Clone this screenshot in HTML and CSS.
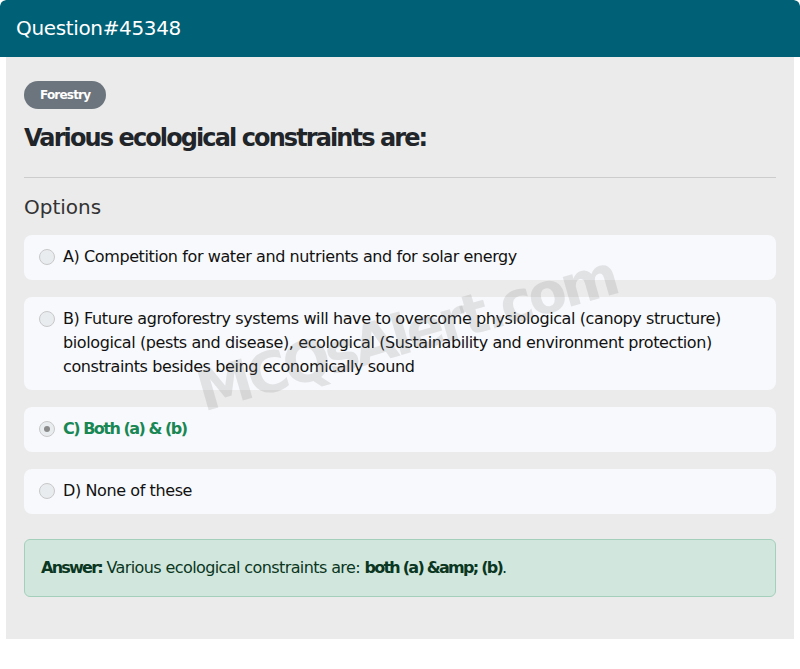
FILE: index.html
```html
<!DOCTYPE html>
<html lang="en">
<head>
<meta charset="utf-8">
<title>Question#45348</title>
<link rel="stylesheet" href="styles.css">
</head>
<body>
<div class="card">
  <div class="card-header">Question#45348</div>
  <div class="card-body">
    <span class="badge">Forestry</span>
    <h4 class="title">Various ecological constraints are:</h4>
    <hr class="divider">
    <h5 class="options-label">Options</h5>
    <div class="options">
      <label class="option"><span class="radio"></span><span class="opt-text">A) Competition for water and nutrients and for solar energy</span></label>
      <label class="option"><span class="radio"></span><span class="opt-text">B) Future agroforestry systems will have to overcome physiological (canopy structure) biological (pests and disease), ecological (Sustainability and environment protection) constraints besides being economically sound</span></label>
      <label class="option correct"><span class="radio checked"></span><span class="opt-text">C) Both (a) &amp; (b)</span></label>
      <label class="option"><span class="radio"></span><span class="opt-text">D) None of these</span></label>
    </div>
    <div class="answer"><strong>Answer:</strong> Various ecological constraints are: <strong>both (a) &amp;amp; (b)</strong>.</div>
    <div class="watermark">MCQsAlert.com</div>
  </div>
</div>
</body>
</html>
```
FILE: styles.css
```css
* { box-sizing: border-box; }
html, body { margin: 0; padding: 0; background: #fff; }
body { font-family: "DejaVu Sans", sans-serif; color: #212529; }
.card { width: 800px; border-radius: 6px; overflow: hidden; padding-bottom: 7px; }
.card-header {
  background: #006075;
  color: #fff;
  font-size: 20px;
  letter-spacing: -0.35px;
  height: 57px;
  line-height: 57px;
  padding: 0 16px;
  border-radius: 6px 6px 0 0;
}
.card-body {
  position: relative;
  background: #ebebeb;
  margin: 0 6px;
  padding: 24px 18px 42px;
  min-height: 581px;
}
.badge {
  display: inline-block;
  background: #6c757d;
  color: #fff;
  font-size: 12px;
  font-weight: bold;
  letter-spacing: -0.8px;
  padding: 0 16px;
  height: 28px;
  line-height: 28px;
  border-radius: 14px;
}
.title {
  margin: 14px 0 0;
  font-size: 24px;
  font-weight: bold;
  letter-spacing: -1.9px;
  line-height: 30px;
}
.divider { border: 0; border-top: 1px solid #ccc; margin: 24px 0 0; }
.options-label {
  margin: 14px 0 0;
  font-size: 20px;
  font-weight: normal;
  line-height: 30px;
  color: #333;
}
.options { display: flex; flex-direction: column; gap: 17px; margin-top: 13px; }
.option {
  display: flex;
  align-items: flex-start;
  gap: 8px;
  background: #f8f9fc;
  border-radius: 8px;
  padding: 10px 15px 11px;
  font-size: 16px;
  line-height: 24px;
  letter-spacing: -0.4px;
  color: #111;
}
.radio {
  flex: none;
  width: 16px;
  height: 16px;
  margin-top: 4px;
  border-radius: 50%;
  border: 1px solid #c8c8c8;
  background: #e9ecef;
  position: relative;
}
.radio.checked::after {
  content: "";
  position: absolute;
  left: 4px; top: 4px;
  width: 6px; height: 6px;
  border-radius: 50%;
  background: #8a8a8a;
}
.correct { color: #198754; font-weight: bold; letter-spacing: -1.5px; }
.answer {
  margin-top: 25px;
  background: #d1e7dd;
  border: 1px solid #a3cfbb;
  border-radius: 6px;
  padding: 16px 16px;
  font-size: 16px;
  line-height: 24px;
  letter-spacing: -0.6px;
  color: #0a3622;
}
.answer strong { font-weight: bold; letter-spacing: -1.75px; }
.watermark {
  position: absolute;
  left: 184px;
  top: 244px;
  font-size: 56px;
  font-weight: bold;
  letter-spacing: -4px;
  color: rgba(120, 120, 120, 0.18);
  transform: rotate(-16deg);
  pointer-events: none;
  white-space: nowrap;
}
```
